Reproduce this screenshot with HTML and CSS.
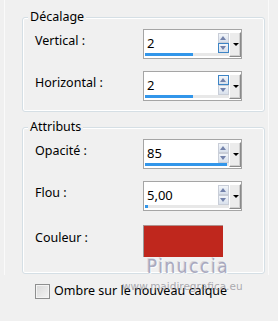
FILE: index.html
```html
<!DOCTYPE html>
<html lang="fr">
<head>
<meta charset="utf-8">
<link rel="stylesheet" href="styles.css">
</head>
<body>
<div class="panel">
  <div class="group g1">
    <div class="title">Décalage</div>
    <div class="row">
      <span class="label">Vertical :</span>
      <div class="spin">
        <div class="field">
          <div class="top">
            <span class="value">2</span>
            <div class="arrows"><span class="btn up"></span><span class="btn down hot"></span></div>
          </div>
          <div class="track"><div class="fill" style="width:48px"></div></div>
        </div>
        <div class="drop"><span class="tri"></span></div>
      </div>
    </div>
    <div class="row">
      <span class="label">Horizontal :</span>
      <div class="spin">
        <div class="field">
          <div class="top">
            <span class="value">2</span>
            <div class="arrows"><span class="btn up hot"></span><span class="btn down"></span></div>
          </div>
          <div class="track"><div class="fill" style="width:48px"></div></div>
        </div>
        <div class="drop"><span class="tri"></span></div>
      </div>
    </div>
  </div>
  <div class="group g2">
    <div class="title">Attributs</div>
    <div class="row">
      <span class="label">Opacité :</span>
      <div class="spin">
        <div class="field">
          <div class="top">
            <span class="value">85</span>
            <div class="arrows"><span class="btn up"></span><span class="btn down"></span></div>
          </div>
          <div class="track"><div class="fill" style="width:82px"></div></div>
        </div>
        <div class="drop"><span class="tri"></span></div>
      </div>
    </div>
    <div class="row">
      <span class="label">Flou :</span>
      <div class="spin">
        <div class="field">
          <div class="top">
            <span class="value">5,00</span>
            <div class="arrows"><span class="btn up"></span><span class="btn down"></span></div>
          </div>
          <div class="track"><div class="fill" style="width:3px"></div></div>
        </div>
        <div class="drop"><span class="tri"></span></div>
      </div>
    </div>
    <div class="row color-row">
      <span class="label">Couleur :</span>
      <div class="swatch"></div>
    </div>
  </div>
</div>
<label class="check"><span class="box"></span><span class="ctext">Ombre sur le nouveau calque</span></label>
<div class="watermark">
  <div class="wm1">Pinuccia</div>
  <div class="wm2">www.maidiregrafica.eu</div>
</div>
</body>
</html>
```
FILE: styles.css
```css
html, body {
  margin: 0;
  padding: 0;
  background: #f0f0f0;
}
body {
  width: 278px;
  height: 321px;
  overflow: hidden;
  position: relative;
  font-family: "Noto Sans", "DejaVu Sans", sans-serif;
  font-size: 12.5px;
  color: #000;
}
.panel {
  margin-left: 4px;
  width: 265px;
  height: 275px;
  box-sizing: border-box;
  border-left: 1px solid #fafafa;
  border-right: 1px solid #fafafa;
  padding: 17px 0 0 17px;
}
.group {
  width: 243px;
  box-sizing: border-box;
  border: 1px solid #d5dfe5;
  border-radius: 3px;
  box-shadow: inset 0 0 0 1px #fff;
}
.g1 { height: 95px; }
.g2 { height: 147px; margin-top: 15px; }
.title {
  width: fit-content;
  margin: -9px 0 0 5px;
  padding: 0 2px;
  line-height: 16px;
  height: 16px;
  background: #f0f0f0;
}
.row {
  display: flex;
  align-items: flex-start;
  padding-left: 12px;
  margin-top: 4px;
  height: 30px;
}
.row + .row { margin-top: 12px; }
.row.color-row { margin-top: 14px; height: 32px; }
.label {
  width: 108px;
  line-height: 16px;
  margin-top: 4px;
}
.color-row .label { margin-top: 5px; }
.spin {
  width: 99px;
  height: 30px;
  box-sizing: border-box;
  border: 1px solid #a5a5a5;
  background: #fff;
  display: flex;
  padding: 3px 0 0 1px;
}
.field {
  width: 84px;
  display: flex;
  flex-direction: column;
}
.top {
  height: 20px;
  display: flex;
  align-items: center;
}
.value {
  flex: 1;
  padding-left: 2px;
  font-size: 13px;
  line-height: 16px;
}
.arrows {
  width: 11px;
  display: flex;
  flex-direction: column;
}
.btn {
  display: block;
  height: 10px;
  box-sizing: border-box;
  border: 1px solid #c9ced8;
  background: linear-gradient(#f3f6fa, #d8e0ec);
  position: relative;
}
.btn.hot { border-color: #3d85c6; }
.btn::after {
  content: "";
  position: absolute;
  left: 1px;
  width: 0;
  height: 0;
  border-left: 3.5px solid transparent;
  border-right: 3.5px solid transparent;
}
.btn.up::after { top: 2px; border-bottom: 4px solid #7382ab; }
.btn.down::after { top: 2px; border-top: 4px solid #7382ab; }
.track {
  height: 3px;
  background: #e8e8e8;
}
.fill {
  height: 3px;
  background: #3296ea;
}
.drop {
  width: 12px;
  height: 25px;
  margin-top: -1px;
  box-sizing: border-box;
  background: #ececec;
  border-top: 1px solid #fff;
  border-left: 1px solid #fff;
  border-right: 1px solid #8a8a8a;
  border-bottom: 1px solid #8a8a8a;
  box-shadow: inset -1px -1px 0 #cfcfcf;
  display: flex;
  align-items: center;
  justify-content: center;
}
.tri {
  width: 0;
  height: 0;
  border-left: 3px solid transparent;
  border-right: 3px solid transparent;
  border-top: 3px solid #000;
  margin-left: 1px;
}
.swatch {
  width: 80px;
  height: 32px;
  box-sizing: border-box;
  background: #bf271d;
  border-top: 1px solid #b0908c;
  border-left: 1px solid #9a9a9a;
}
.check {
  display: flex;
  align-items: center;
  margin: 8px 0 0 35px;
  gap: 4px;
}
.box {
  width: 15px;
  height: 15px;
  box-sizing: border-box;
  border: 1px solid #8e8f8f;
  background: linear-gradient(135deg, #d8d8d8, #f4f4f4);
  box-shadow: inset 0 0 0 1px #f4f4f4;
}
.ctext { line-height: 16px; }
.watermark {
  position: absolute;
  left: 122px;
  top: 255px;
  width: 120px;
  text-align: center;
  pointer-events: none;
}
.wm1 {
  font-family: "DejaVu Sans Condensed", "DejaVu Sans", sans-serif;
  font-size: 19px;
  letter-spacing: 1.5px;
  line-height: 23px;
  padding-left: 12px;
  color: rgba(150, 150, 178, 0.8);
  text-shadow: 1px 1px 0 rgba(255,255,255,0.7), -1px -1px 0 rgba(110,110,130,0.2);
}
.wm2 {
  font-family: "DejaVu Sans", sans-serif;
  font-size: 10.5px;
  line-height: 12px;
  color: rgba(120, 120, 130, 0.6);
  margin-top: 2px;
}
```
